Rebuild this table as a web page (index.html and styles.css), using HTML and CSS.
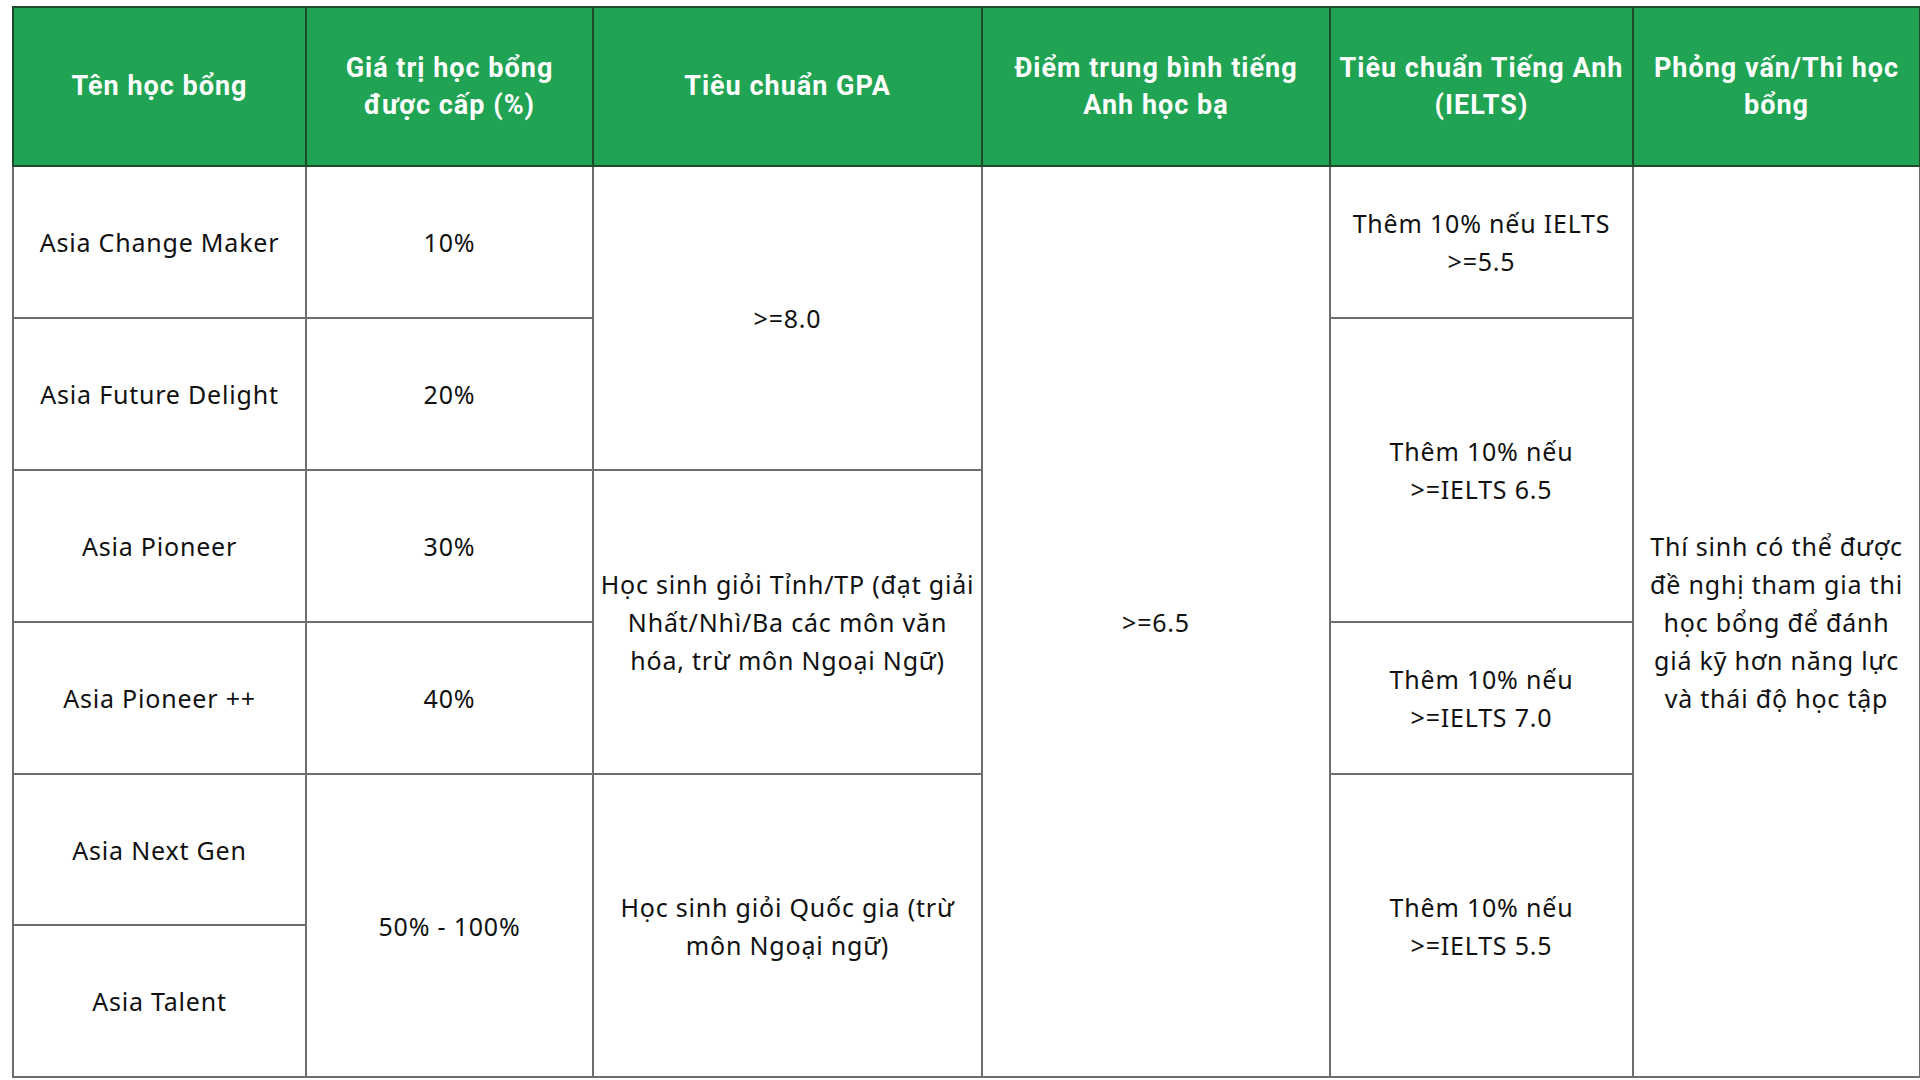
FILE: index.html
```html
<!DOCTYPE html>
<html lang="vi">
<head>
<meta charset="utf-8">
<link rel="stylesheet" href="styles.css">
</head>
<body>
<table class="scholar">
  <colgroup>
    <col class="c1"><col class="c2"><col class="c3"><col class="c4"><col class="c5"><col class="c6">
  </colgroup>
  <thead>
    <tr class="head">
      <th>Tên học bổng</th>
      <th>Giá trị học bổng<br>được cấp (%)</th>
      <th>Tiêu chuẩn GPA</th>
      <th>Điểm trung bình tiếng<br>Anh học bạ</th>
      <th>Tiêu chuẩn Tiếng Anh<br>(IELTS)</th>
      <th>Phỏng vấn/Thi học<br>bổng</th>
    </tr>
  </thead>
  <tbody>
    <tr class="r1">
      <td>Asia Change Maker</td>
      <td>10%</td>
      <td rowspan="2">&gt;=8.0</td>
      <td rowspan="6">&gt;=6.5</td>
      <td>Thêm 10% nếu IELTS<br>&gt;=5.5</td>
      <td rowspan="6">Thí sinh có thể được<br>đề nghị tham gia thi<br>học bổng để đánh<br>giá kỹ hơn năng lực<br>và thái độ học tập</td>
    </tr>
    <tr class="r2">
      <td>Asia Future Delight</td>
      <td>20%</td>
      <td rowspan="2">Thêm 10% nếu<br>&gt;=IELTS 6.5</td>
    </tr>
    <tr class="r3">
      <td>Asia Pioneer</td>
      <td>30%</td>
      <td rowspan="2">Học sinh giỏi Tỉnh/TP (đạt giải<br>Nhất/Nhì/Ba các môn văn<br>hóa, trừ môn Ngoại Ngữ)</td>
    </tr>
    <tr class="r4">
      <td>Asia Pioneer ++</td>
      <td>40%</td>
      <td>Thêm 10% nếu<br>&gt;=IELTS 7.0</td>
    </tr>
    <tr class="r5">
      <td>Asia Next Gen</td>
      <td rowspan="2">50% - 100%</td>
      <td rowspan="2">Học sinh giỏi Quốc gia (trừ<br>môn Ngoại ngữ)</td>
      <td rowspan="2">Thêm 10% nếu<br>&gt;=IELTS 5.5</td>
    </tr>
    <tr class="r6">
      <td>Asia Talent</td>
    </tr>
  </tbody>
</table>
</body>
</html>
```
FILE: styles.css
```css
html, body {
  margin: 0;
  padding: 0;
  background: #ffffff;
}
body {
  padding: 6px 0 0 12px;
}
.scholar {
  border-collapse: collapse;
  table-layout: fixed;
  width: 1907px;
  font-family: "Noto Sans", "Open Sans", sans-serif;
  font-size: 25px;
  letter-spacing: 0.8px;
  line-height: 38px;
  color: #111111;
}
.c1 { width: 293px; }
.c2 { width: 287px; }
.c3 { width: 389px; }
.c4 { width: 348px; }
.c5 { width: 303px; }
.c6 { width: 287px; }
.scholar th,
.scholar td {
  border: 2px solid #6e6e6e;
  text-align: center;
  vertical-align: middle;
  padding: 0 2px;
  white-space: nowrap;
}
.scholar th {
  background: #21a354;
  color: #ffffff;
  font-family: Roboto, "Liberation Sans", sans-serif;
  font-weight: 700;
  font-size: 27px;
  letter-spacing: 1px;
  line-height: 37px;
  border-color: #1d4b2c;
}
.head { height: 159px; }
.r1, .r2, .r3, .r4, .r6 { height: 152px; }
.r5 { height: 151px; }
```
